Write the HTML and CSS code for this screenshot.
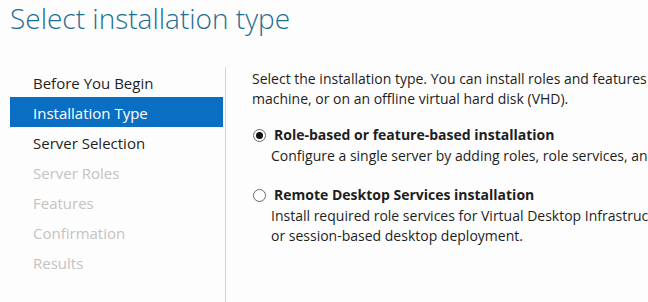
FILE: index.html
```html
<!DOCTYPE html>
<html lang="en">
<head>
    <meta charset="UTF-8">
    <title>Add Roles and Features Wizard</title>
    <link rel="stylesheet" href="styles.css">
</head>
<body>
    <h1 class="page_title">Select installation type</h1>

    <div class="wizard">
        <ul class="steps">
            <li class="step">Before You Begin</li>
            <li class="step current">Installation Type</li>
            <li class="step">Server Selection</li>
            <li class="step disabled">Server Roles</li>
            <li class="step disabled">Features</li>
            <li class="step disabled">Confirmation</li>
            <li class="step disabled">Results</li>
        </ul>

        <div class="content">
            <p class="intro">Select the installation type. You can install roles and features on a running physical computer or virtual<br>machine, or on an offline virtual hard disk (VHD).</p>

            <label class="option">
                <span class="radio checked"></span>
                <span class="option_title">Role-based or feature-based installation</span>
            </label>
            <p class="option_desc">Configure a single server by adding roles, role services, and features.</p>

            <label class="option">
                <span class="radio"></span>
                <span class="option_title">Remote Desktop Services installation</span>
            </label>
            <p class="option_desc">Install required role services for Virtual Desktop Infrastructure (VDI) to create a virtual machine-based<br>or session-based desktop deployment.</p>
        </div>
    </div>
</body>
</html>
```

FILE: styles.css
```css
body{
    margin: 0;
    background-color: #fdfdfd;
    font-family: 'Open Sans', 'Noto Sans', sans-serif;
    color: #1e1e1e;
    overflow: hidden;
    height: 302px;
    width: 648px;
}

.page_title{
    margin: 0;
    padding: 0 0 0 10px;
    height: 67px;
    font-size: 28px;
    font-weight: 300;
    line-height: 36px;
    color: #1f6f95;
    white-space: nowrap;
}

.wizard{
    display: flex;
    height: 235px;
    overflow: hidden;
}

.steps{
    list-style: none;
    margin: 0;
    padding: 0 0 0 10px;
    width: 215px;
    flex-shrink: 0;
    border-right: 1px solid #d4d4d4;
}

.step{
    height: 27px;
    line-height: 27px;
    padding: 3px 0 0 23px;
    margin-right: 2px;
    font-size: 15px;
    white-space: nowrap;
}

.step.current{
    background-color: #0a6fc2;
    color: white;
}

.step.disabled{
    color: #c3c3c3;
}

.content{
    padding: 2px 0 0 26px;
    font-size: 14px;
    line-height: 20px;
    white-space: nowrap;
    min-width: 0;
    overflow: hidden;
}

.intro{
    margin: 0 0 16px 0;
}

.option{
    display: flex;
    align-items: center;
    gap: 8px;
    padding-left: 1px;
}

.radio{
    width: 11px;
    height: 11px;
    border: 1px solid #6a6a6a;
    border-radius: 50%;
    background-color: white;
    position: relative;
}

.radio.checked::after{
    content: '';
    position: absolute;
    left: 2px;
    top: 2px;
    width: 7px;
    height: 7px;
    border-radius: 50%;
    background-color: #111;
}

.option_title{
    font-weight: bold;
    font-size: 14px;
}

.option_desc{
    margin: 1px 0 19px 19px;
}
```
